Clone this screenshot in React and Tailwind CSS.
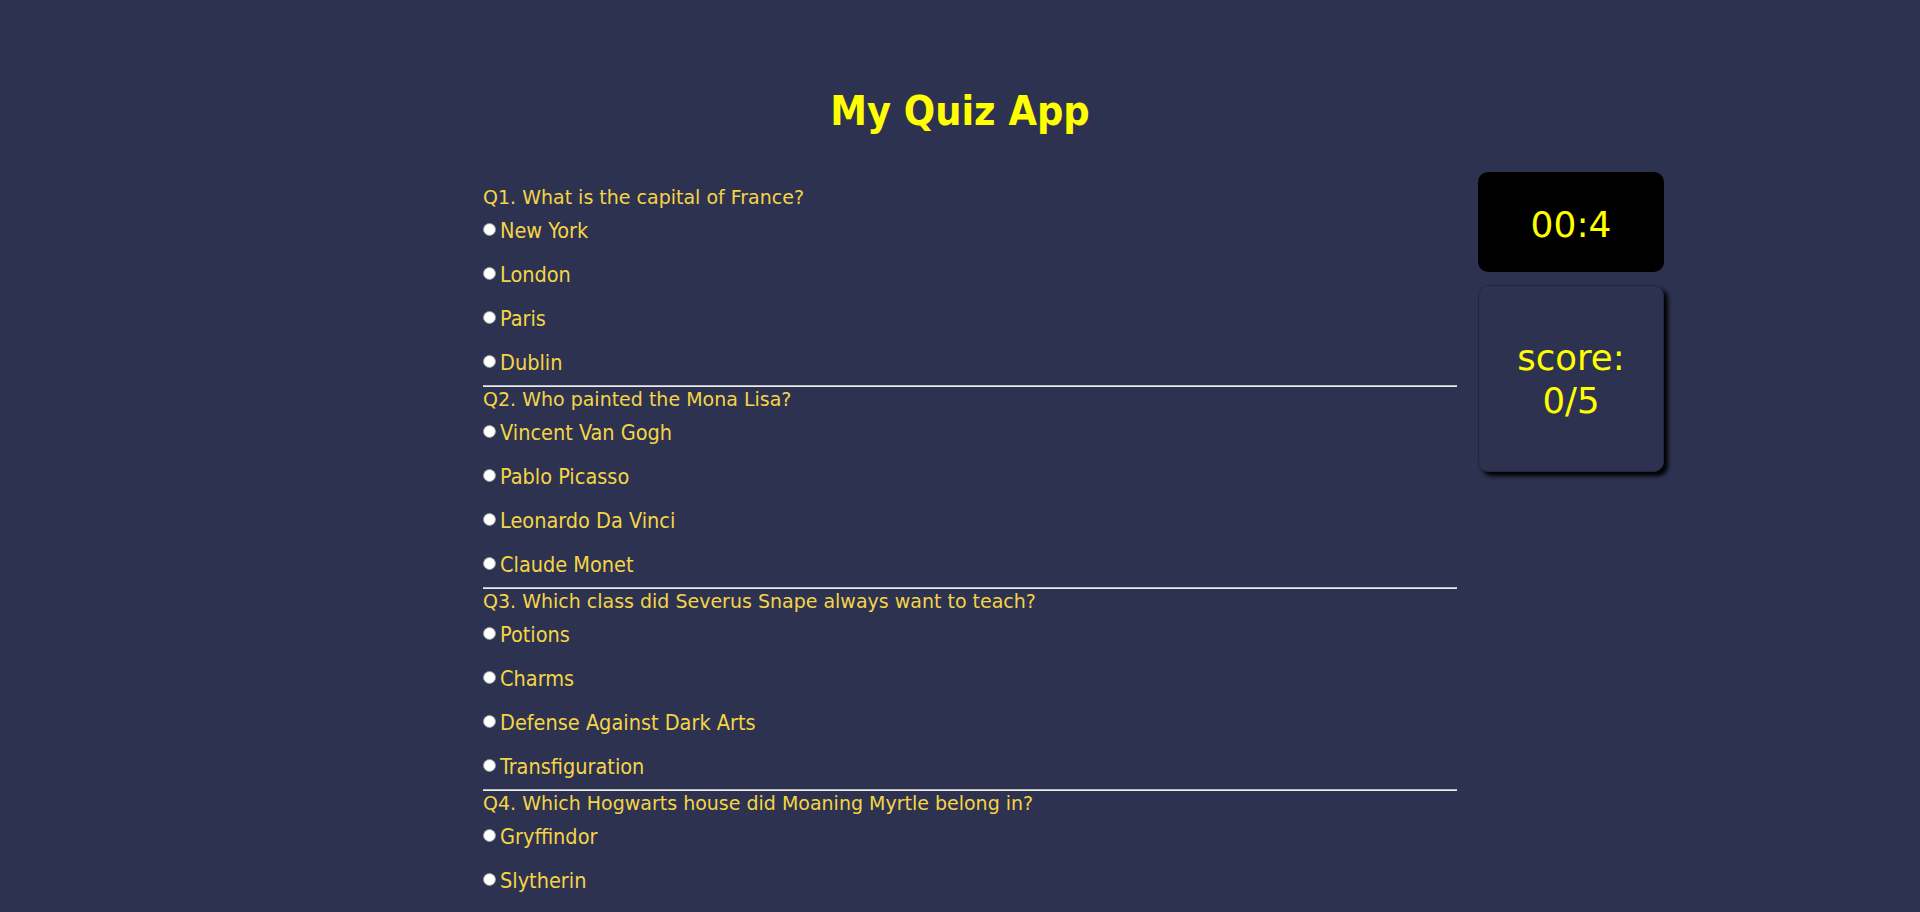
import { useState } from 'react';

const questions = [
  {
    id: 1,
    text: 'What is the capital of France?',
    options: ['New York', 'London', 'Paris', 'Dublin'],
    answer: 'Paris',
  },
  {
    id: 2,
    text: 'Who painted the Mona Lisa?',
    options: ['Vincent Van Gogh', 'Pablo Picasso', 'Leonardo Da Vinci', 'Claude Monet'],
    answer: 'Leonardo Da Vinci',
  },
  {
    id: 3,
    text: 'Which class did Severus Snape always want to teach?',
    options: ['Potions', 'Charms', 'Defense Against Dark Arts', 'Transfiguration'],
    answer: 'Defense Against Dark Arts',
  },
  {
    id: 4,
    text: 'Which Hogwarts house did Moaning Myrtle belong in?',
    options: ['Gryffindor', 'Slytherin', 'Ravenclaw', 'Hufflepuff'],
    answer: 'Ravenclaw',
  },
  {
    id: 5,
    text: 'What is the name of Harry Potter\'s owl?',
    options: ['Errol', 'Hedwig', 'Pigwidgeon', 'Hermes'],
    answer: 'Hedwig',
  },
];

function Question({ question, selected, onSelect }) {
  return (
    <div>
      <p className="text-[19px] leading-[22px] text-[#f5d547]">
        Q{question.id}. {question.text}
      </p>
      <div className="mt-[12px] flex flex-col gap-[22px]">
        {question.options.map((option) => (
          <label
            key={option}
            className="flex items-start h-[22px] cursor-pointer text-[21.5px] leading-[22px] text-[#f5d547] [font-stretch:condensed]"
          >
            <input
              type="radio"
              name={`q${question.id}`}
              checked={selected === option}
              onChange={() => onSelect(question.id, option)}
              className="appearance-none shrink-0 w-[13px] h-[13px] mt-[3px] mr-[4px] rounded-full bg-white border border-[#9a9a9a] checked:bg-[#f5d547]"
            />
            {option}
          </label>
        ))}
      </div>
      <div className="mt-[11px] mb-[1px] h-[2px] border-t border-t-[#bdbdbd] border-b border-b-[#ececec]"></div>
    </div>
  );
}

function App() {
  const [answers, setAnswers] = useState({});
  const [score] = useState(0);

  const handleSelect = (id, option) => {
    setAnswers((prev) => ({ ...prev, [id]: option }));
  };

  return (
    <div className="min-h-screen bg-[#2d3250] font-['DejaVu_Sans',sans-serif] pt-[88px] pb-16">
      <h1 className="text-center text-[41px] leading-[46px] font-bold text-[#ffff00] [font-stretch:condensed]">
        My Quiz App
      </h1>

      <div className="flex items-start gap-[21px] pl-[483px] mt-[38px]">
        <div className="w-[974px] pt-[13.5px]">
          {questions.map((q) => (
            <Question
              key={q.id}
              question={q}
              selected={answers[q.id]}
              onSelect={handleSelect}
            />
          ))}
        </div>

        <div className="w-[186px] flex flex-col gap-[13px]">
          <div className="h-[100px] rounded-[10px] bg-black flex items-center justify-center pt-[6px]">
            <span className="text-[36px] text-[#ffff00]">00:4</span>
          </div>
          <div className="h-[187px] rounded-[10px] bg-[#2d3250] border border-[#23273f] shadow-[4px_4px_4px_#000] flex flex-col items-center justify-center text-[35.5px] leading-[43px] text-[#ffff00]">
            <span>score:</span>
            <span>
              {score}/{questions.length}
            </span>
          </div>
        </div>
      </div>
    </div>
  );
}

export default App;
